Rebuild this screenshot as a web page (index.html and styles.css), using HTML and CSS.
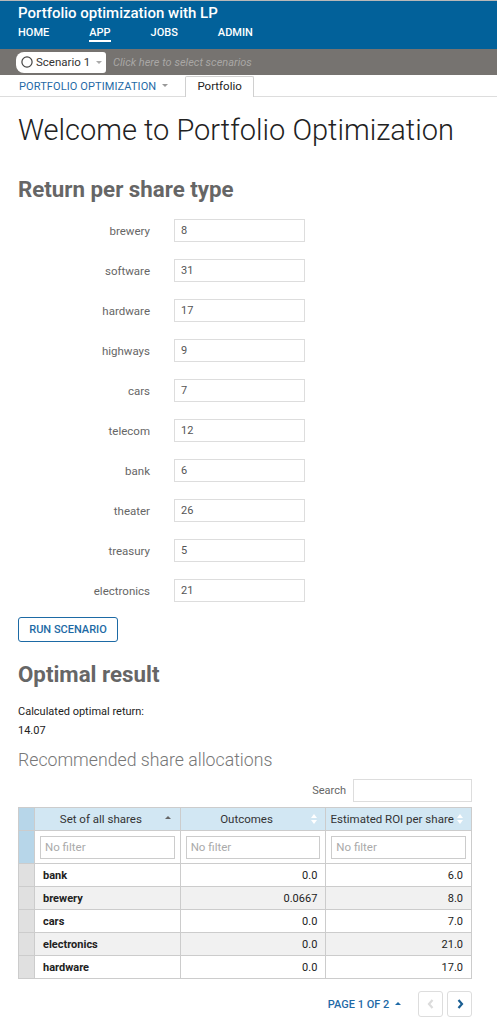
FILE: index.html
```html
<!DOCTYPE html>
<html lang="en">
<head>
<meta charset="utf-8">
<title>Portfolio optimization with LP</title>
<link rel="stylesheet" href="styles.css">
</head>
<body>
<header class="topbar">
  <div class="app-title">Portfolio optimization with LP</div>
  <nav class="nav">
    <span class="nav-item">HOME</span>
    <span class="nav-item active">APP</span>
    <span class="nav-item">JOBS</span>
    <span class="nav-item">ADMIN</span>
  </nav>
</header>
<div class="scenbar">
  <div class="pill">
    <svg class="pill-icon" width="12" height="12" viewBox="0 0 12 12"><circle cx="6" cy="6" r="5.1" fill="none" stroke="#444" stroke-width="1.2"/></svg>
    <span class="pill-text">Scenario 1</span>
    <span class="caret grey"></span>
  </div>
  <span class="scen-hint">Click here to select scenarios</span>
</div>
<div class="tabs">
  <span class="tab-menu">PORTFOLIO OPTIMIZATION <span class="caret grey"></span></span>
  <span class="tab">Portfolio</span>
</div>
<main class="main">
  <h1 class="welcome">Welcome to Portfolio Optimization</h1>
  <h2 class="section">Return per share type</h2>
  <div class="form">
    <label class="flabel">brewery</label><div class="finput">8</div>
    <label class="flabel">software</label><div class="finput">31</div>
    <label class="flabel">hardware</label><div class="finput">17</div>
    <label class="flabel">highways</label><div class="finput">9</div>
    <label class="flabel">cars</label><div class="finput">7</div>
    <label class="flabel">telecom</label><div class="finput">12</div>
    <label class="flabel">bank</label><div class="finput">6</div>
    <label class="flabel">theater</label><div class="finput">26</div>
    <label class="flabel">treasury</label><div class="finput">5</div>
    <label class="flabel">electronics</label><div class="finput">21</div>
  </div>
  <button class="run-btn">RUN SCENARIO</button>
  <h2 class="section result">Optimal result</h2>
  <div class="calc">
    <div>Calculated optimal return:</div>
    <div>14.07</div>
  </div>
  <h3 class="sub">Recommended share allocations</h3>
  <div class="search-row">
    <span class="search-label">Search</span>
    <div class="search-input"></div>
  </div>
  <table class="grid">
    <thead>
      <tr class="hdr">
        <th class="gut"></th>
        <th><span class="hcell">Set of all shares</span><span class="sort-asc"></span></th>
        <th><span class="hcell">Outcomes</span><span class="sort-both"></span></th>
        <th><span class="hcell">Estimated ROI per share</span><span class="sort-both"></span></th>
      </tr>
      <tr class="filters">
        <th class="gut"></th>
        <th><div class="filter">No filter</div></th>
        <th><div class="filter">No filter</div></th>
        <th><div class="filter">No filter</div></th>
      </tr>
    </thead>
    <tbody>
      <tr><td class="gut"></td><td class="name">bank</td><td class="num">0.0</td><td class="num">6.0</td></tr>
      <tr class="alt"><td class="gut"></td><td class="name">brewery</td><td class="num">0.0667</td><td class="num">8.0</td></tr>
      <tr><td class="gut"></td><td class="name">cars</td><td class="num">0.0</td><td class="num">7.0</td></tr>
      <tr class="alt"><td class="gut"></td><td class="name">electronics</td><td class="num">0.0</td><td class="num">21.0</td></tr>
      <tr><td class="gut"></td><td class="name">hardware</td><td class="num">0.0</td><td class="num">17.0</td></tr>
    </tbody>
  </table>
  <div class="pager">
    <span class="page-label">PAGE 1 OF 2 <span class="caret-up"></span></span>
    <div class="page-btns">
      <span class="pbtn"><svg width="10" height="12" viewBox="0 0 10 12"><polyline points="6.5,2 3,6 6.5,10" fill="none" stroke="#dcdcdc" stroke-width="2.2"/></svg></span>
      <span class="pbtn"><svg width="10" height="12" viewBox="0 0 10 12"><polyline points="3.5,2 7,6 3.5,10" fill="none" stroke="#1a5e92" stroke-width="2.2"/></svg></span>
    </div>
  </div>
</main>
</body>
</html>
```

FILE: styles.css
```css
* { box-sizing: border-box; }
body {
  margin: 0;
  font-family: Roboto, "Liberation Sans", Arial, sans-serif;
  color: #222;
  background: #fff;
}

.topbar {
  height: 49px;
  border-top: 1px solid #b8b8b8;
  background: #02619a;
  color: #fff;
  padding: 3px 18px 0;
}
.app-title {
  font-size: 15px;
  font-weight: 500;
  line-height: 18px;
}
.nav {
  display: flex;
  gap: 40px;
  margin-top: 4px;
}
.nav-item {
  font-size: 11px;
  font-weight: 500;
  line-height: 14px;
  border-bottom: 2px solid transparent;
}
.nav-item.active { border-bottom-color: #fff; }

.scenbar {
  height: 26px;
  background: #767370;
  display: flex;
  align-items: center;
  padding-left: 16px;
}
.pill {
  height: 21px;
  width: 90px;
  background: #fff;
  border-radius: 8px 3px 3px 8px;
  display: flex;
  align-items: center;
  padding-left: 5px;
}
.pill-icon { display: block; margin-right: 3px; }
.pill-text { font-size: 11.5px; color: #333; }
.caret {
  display: inline-block;
  width: 0; height: 0;
  border-left: 3px solid transparent;
  border-right: 3px solid transparent;
  border-top: 3px solid #999;
  vertical-align: middle;
}
.pill .caret { margin-left: 6px; border-top-color: #aaa; }
.scen-hint {
  margin-left: 7px;
  font-size: 11px;
  font-style: italic;
  color: #a9a7a5;
}

.tabs {
  height: 22px;
  border-bottom: 1px solid #ddd;
  display: flex;
  align-items: flex-end;
  padding-left: 19px;
}
.tab-menu {
  font-size: 11px;
  color: #1f6aa6;
  line-height: 20px;
  align-self: center;
  margin-top: 2px;
  letter-spacing: 0.1px;
}
.tab-menu .caret { margin-left: 3px; margin-top: -2px; }
.tab {
  margin-left: 17px;
  width: 69px;
  border: 1px solid #d0d0d0;
  border-bottom: none;
  border-radius: 2px 2px 0 0;
  background: #fff;
  font-size: 11.5px;
  color: #222;
  text-align: center;
  line-height: 19px;
  margin-bottom: -1px;
  height: 21px;
}

.main { padding: 0 25px 0 18px; }
.welcome {
  margin: 15px 0 0;
  font-size: 29px;
  font-weight: 300;
  line-height: 36px;
  color: #222;
}
.section {
  margin: 26px 0 0;
  font-size: 22.3px;
  font-weight: 700;
  line-height: 30px;
  color: #666;
}
.form {
  margin-top: 15px;
  display: grid;
  grid-template-columns: 132px 131px;
  column-gap: 24px;
  row-gap: 17px;
  align-items: center;
}
.flabel {
  text-align: right;
  font-size: 11.5px;
  color: #666;
  padding-top: 1px;
}
.finput {
  height: 23px;
  border: 1px solid #ddd;
  font-size: 11px;
  color: #555;
  line-height: 21px;
  padding-left: 6px;
}
.run-btn {
  display: block;
  margin-top: 15px;
  width: 100px;
  height: 25px;
  background: #fff;
  border: 1px solid #1d6aa5;
  border-radius: 3px;
  color: #1d6aa5;
  font-family: inherit;
  font-size: 11px;
  font-weight: 500;
  padding: 0;
}
.section.result { margin-top: 17px; }
.calc {
  margin-top: 13px;
  font-size: 11px;
  line-height: 19px;
  color: #222;
}
.sub {
  margin: 8px 0 0;
  font-size: 17.7px;
  font-weight: 300;
  line-height: 24px;
  color: #777;
}
.search-row {
  margin-top: 7px;
  display: flex;
  justify-content: flex-end;
  align-items: center;
  gap: 7px;
}
.search-label { font-size: 11px; color: #666; }
.search-input {
  width: 119px;
  height: 23px;
  border: 1px solid #ddd;
}

.grid {
  margin-top: 5px;
  width: 454px;
  border-collapse: collapse;
  table-layout: fixed;
  font-size: 11px;
}
.grid th, .grid td {
  border: 1px solid #ccc;
  padding: 0;
}
.grid .gut { width: 16px; }
.hdr th {
  height: 23px;
  background: #d2e7f3;
  font-weight: 400;
  font-size: 11.5px;
  color: #333;
  position: relative;
  padding-right: 13px;
}
.hdr th.gut { padding: 0; }
.hdr th.gut, .filters th.gut { background: #b7d6e9; }
.hcell { display: block; text-align: center; }
.sort-asc {
  position: absolute;
  right: 9px;
  top: 8px;
  border-left: 3px solid transparent;
  border-right: 3px solid transparent;
  border-bottom: 3px solid #666;
}
.sort-both {
  position: absolute;
  right: 8px;
  top: 6px;
  width: 6px;
  height: 10px;
}
.sort-both::before, .sort-both::after {
  content: "";
  position: absolute;
  left: 0;
  border-left: 3px solid transparent;
  border-right: 3px solid transparent;
}
.sort-both::before { top: 0; border-bottom: 4px solid #fff; }
.sort-both::after { bottom: 0; border-top: 4px solid #fff; }
.filters th {
  height: 33px;
  background: #fff;
  padding: 0 5px;
}
.filter {
  height: 23px;
  border: 1px solid #ccc;
  font-weight: 400;
  font-size: 11.5px;
  color: #aaa;
  text-align: left;
  line-height: 21px;
  padding-left: 4px;
}
.grid tbody td {
  height: 23px;
  color: #222;
}
.grid tbody td.gut { background: #e0e0e0; }
.grid tbody tr.alt td { background: #f1f1f1; }
.grid tbody tr.alt td.gut { background: #e0e0e0; }
.grid td.name { font-weight: 700; padding-left: 8px; }
.grid td.num { text-align: right; padding-right: 8px; }

.pager {
  margin-top: 12px;
  width: 454px;
  display: flex;
  justify-content: flex-end;
  align-items: center;
}
.page-label {
  font-size: 11px;
  color: #1f6aa6;
  font-weight: 500;
}
.caret-up {
  display: inline-block;
  margin-left: 3px;
  vertical-align: middle;
  margin-top: -3px;
  border-left: 3px solid transparent;
  border-right: 3px solid transparent;
  border-bottom: 3px solid #1f6aa6;
}
.page-btns {
  display: flex;
  gap: 4px;
  margin-left: 17px;
}
.pbtn {
  width: 25px;
  height: 26px;
  border: 1px solid #ddd;
  border-radius: 3px;
  display: flex;
  align-items: center;
  justify-content: center;
}
.pbtn svg { display: block; }
```
